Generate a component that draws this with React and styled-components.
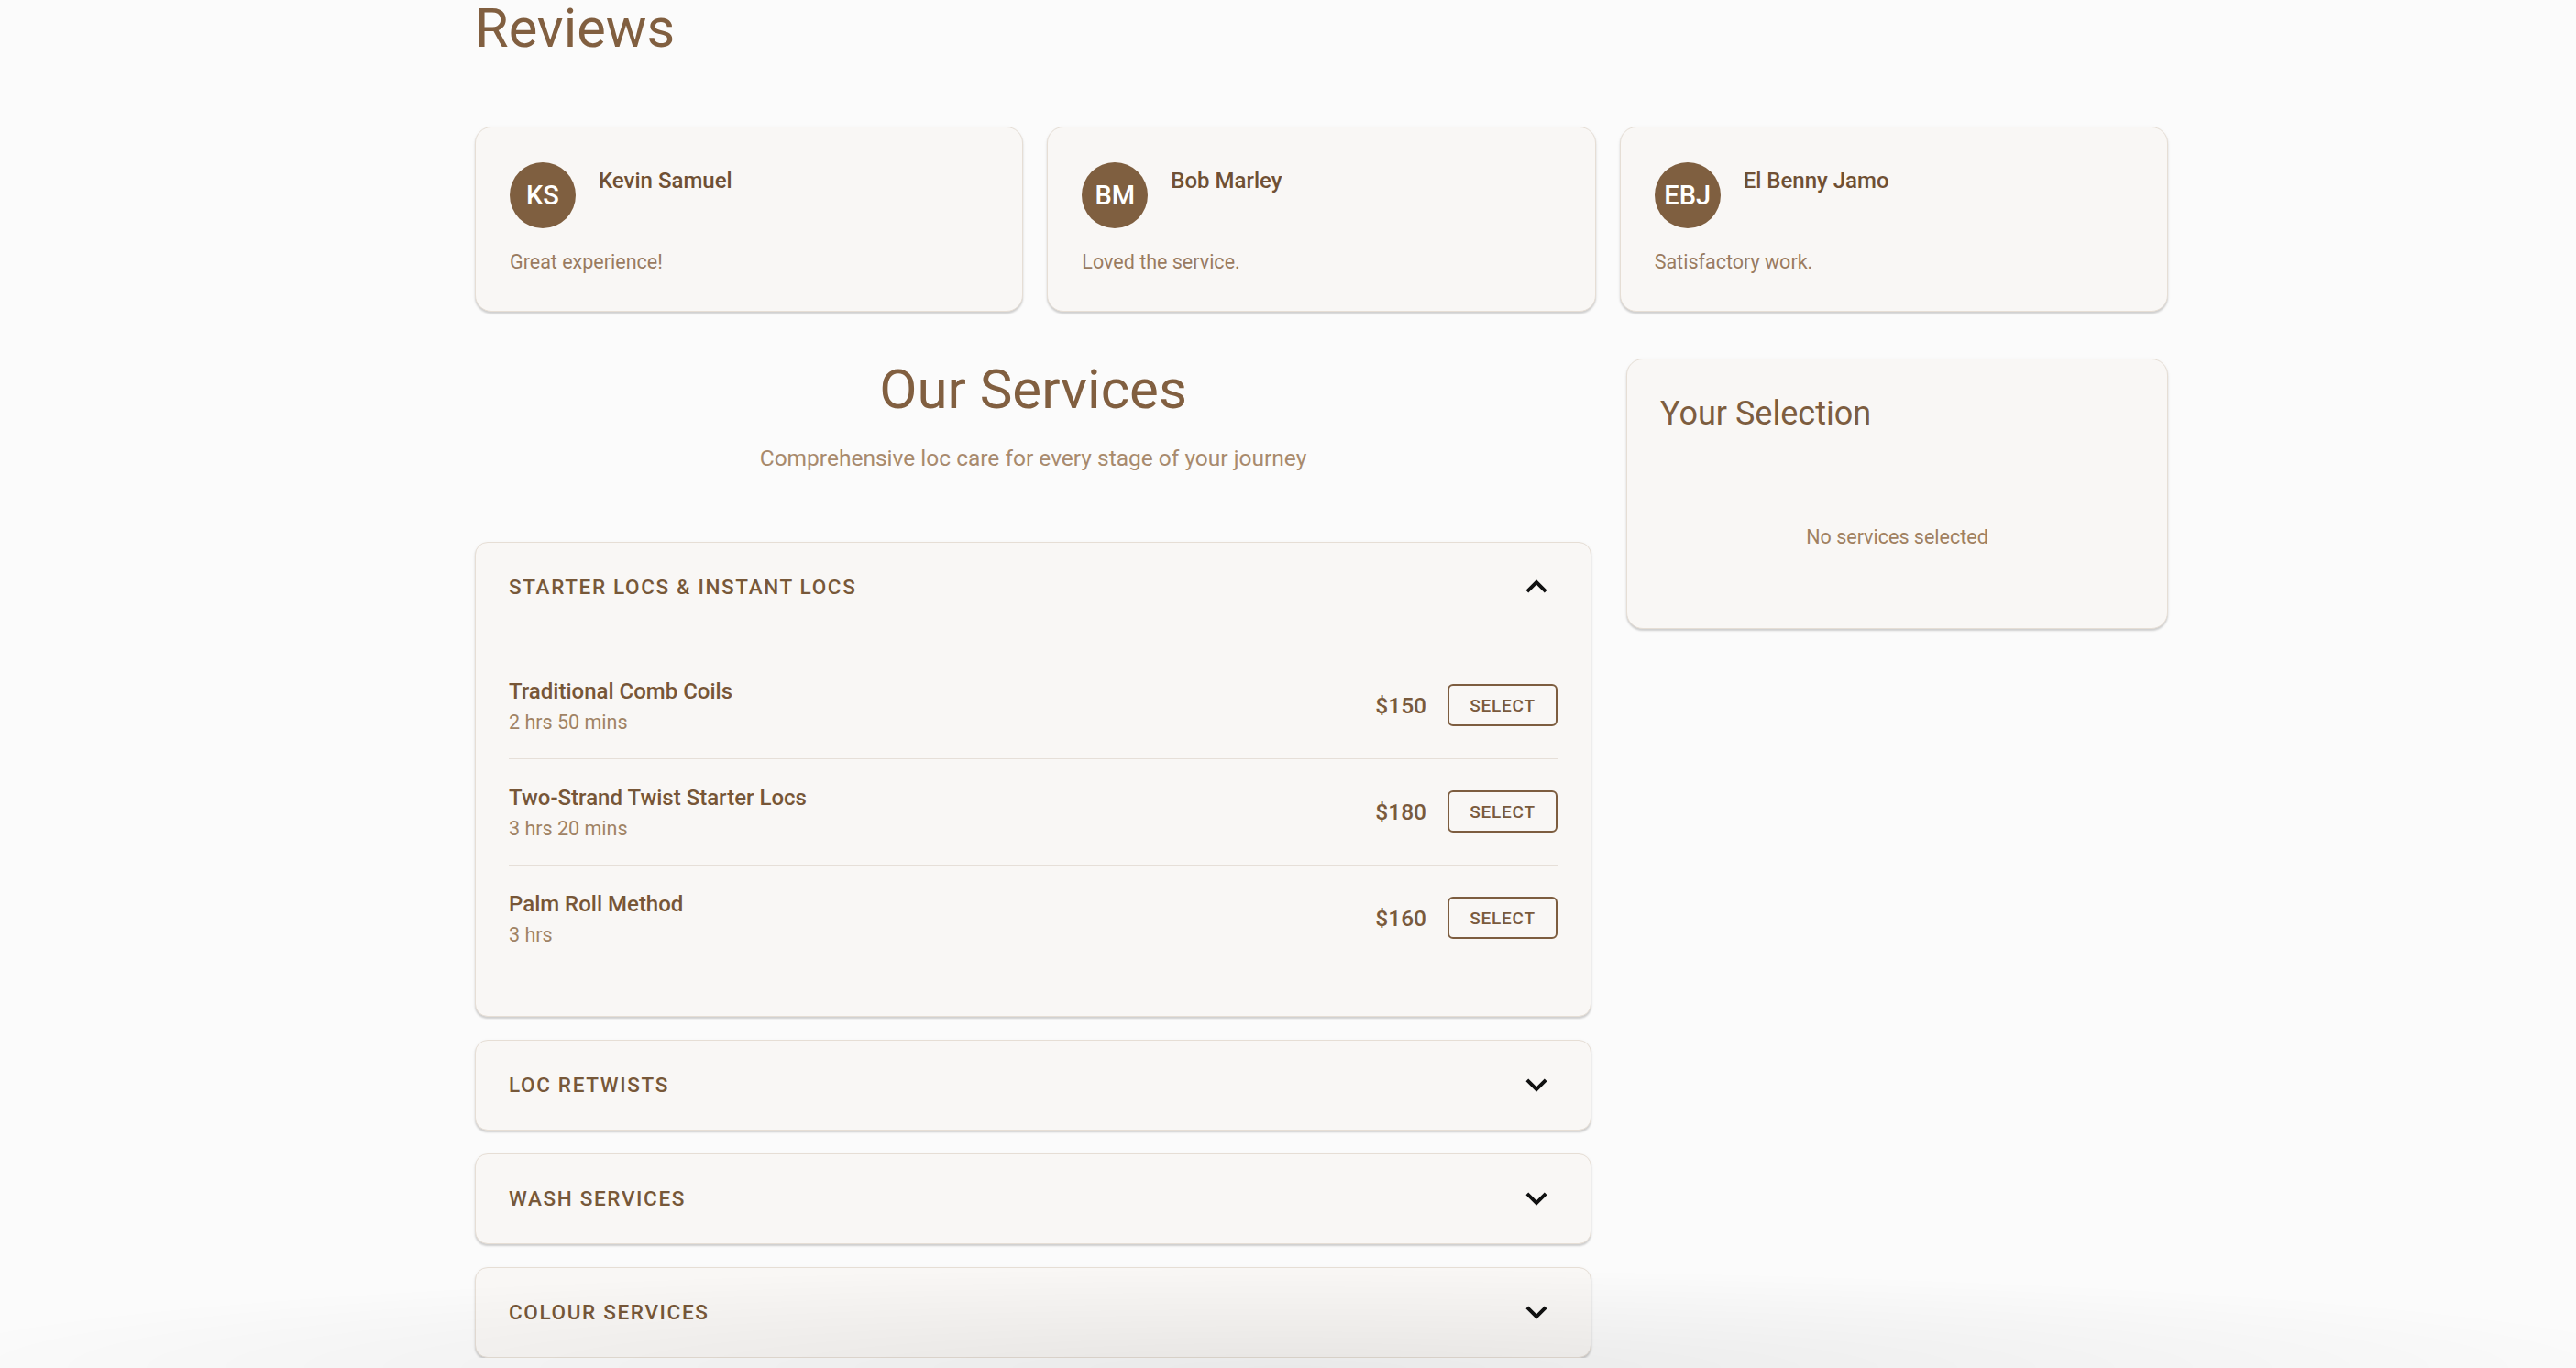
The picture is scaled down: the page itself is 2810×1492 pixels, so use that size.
import styled, { createGlobalStyle } from "styled-components";

const GlobalStyle = createGlobalStyle`
  body {
    margin: 0;
    background: #fbfbfb;
    font-family: Roboto, "Liberation Sans", sans-serif;
    color: #7d5d3f;
  }
`;

const Page = styled.div`
  width: 1847px;
  margin-left: 518px;
`;

const PageTitle = styled.h2`
  margin: 2px 0 0;
  font-size: 59.5px;
  line-height: 1;
  font-weight: 400;
  color: #815f40;
`;

const ReviewGrid = styled.div`
  display: grid;
  grid-template-columns: repeat(3, 1fr);
  gap: 26px;
  margin-top: 76px;
`;

const Card = styled.div`
  background: #f9f7f5;
  border: 1.5px solid #e6ded5;
  border-radius: ${(props) => props.radius || 18}px;
  box-shadow: 0 2px 2px rgba(0, 0, 0, 0.16), 0 1px 4px rgba(0, 0, 0, 0.04);
`;

const ReviewCard = styled(Card)`
  padding: 38px 37px 38px;
`;

const ReviewHead = styled.div`
  display: flex;
  align-items: flex-start;
  gap: 25px;
`;

const Avatar = styled.div`
  width: 72px;
  height: 72px;
  border-radius: 50%;
  background: #7f5f40;
  color: #fff;
  display: flex;
  align-items: center;
  justify-content: center;
  font-size: 29px;
  font-weight: 500;
  flex-shrink: 0;
`;

const Name = styled.div`
  padding-top: 2px;
  font-size: 24px;
  line-height: 1.5;
  font-weight: 500;
  color: #6f5034;
`;

const ReviewText = styled.p`
  margin: 21px 0 0;
  font-size: 21.5px;
  line-height: 31px;
  color: #9a7b60;
`;

const ServicesGrid = styled.div`
  display: grid;
  grid-template-columns: 1218px 1fr;
  gap: 38px;
  margin-top: 51px;
  align-items: start;
`;

const ServicesColumn = styled.div`
  display: flex;
  flex-direction: column;
`;

const SectionTitle = styled.h2`
  margin: 4px 0 0;
  text-align: center;
  font-size: 60px;
  line-height: 1;
  font-weight: 400;
  color: #815f40;
`;

const SectionSub = styled.p`
  margin: 27px 0 73px;
  text-align: center;
  font-size: 24.5px;
  line-height: 36px;
  color: #a88a6d;
`;

const AccordionList = styled.div`
  display: flex;
  flex-direction: column;
  gap: 25px;
`;

const AccordionHeader = styled.div`
  height: 97px;
  padding: 0 36px;
  display: flex;
  align-items: center;
  justify-content: space-between;
`;

const AccordionLabel = styled.span`
  font-size: 22.5px;
  font-weight: 500;
  letter-spacing: 1.65px;
  text-transform: uppercase;
  color: #775839;
`;

const Details = styled.div`
  padding: 23px 36px 49px;
`;

const ServiceRow = styled.div`
  min-height: 115px;
  display: flex;
  align-items: center;
  justify-content: space-between;
  border-bottom: 1.5px solid #e6dfd8;
  &:last-child {
    border-bottom: none;
  }
`;

const ServiceName = styled.div`
  font-size: 24px;
  line-height: 34px;
  font-weight: 500;
  color: #775637;
`;

const Duration = styled.div`
  margin-top: 2px;
  font-size: 21.5px;
  line-height: 29px;
  color: #a08365;
`;

const RowRight = styled.div`
  display: flex;
  align-items: center;
  gap: 23px;
`;

const Price = styled.span`
  font-size: 24.5px;
  font-weight: 500;
  color: #7a5a3c;
`;

const SelectButton = styled.button`
  width: 120px;
  height: 46px;
  border: 2px solid #7d5d3f;
  border-radius: 6px;
  background: transparent;
  color: #7a5a3c;
  font-family: Roboto, sans-serif;
  font-size: 19px;
  font-weight: 500;
  letter-spacing: 0.8px;
  cursor: pointer;
`;

const SelectionCard = styled(Card)`
  padding: 37px 36px 36px;
`;

const SelectionTitle = styled.h3`
  margin: 0;
  font-size: 36px;
  line-height: 44px;
  font-weight: 400;
  color: #7d5d3f;
`;

const Empty = styled.p`
  margin: 0;
  padding: 98px 0 48px;
  text-align: center;
  font-size: 21.5px;
  line-height: 30px;
  color: #a08060;
`;

const BottomShade = styled.div`
  position: fixed;
  left: 0;
  right: 0;
  bottom: 0;
  height: 110px;
  pointer-events: none;
  background: radial-gradient(
    ellipse 55% 100% at 50% 100%,
    rgba(0, 0, 0, 0.07),
    rgba(0, 0, 0, 0) 100%
  );
`;

const Chevron = ({ up }) => (
  <svg width="46" height="46" viewBox="0 0 24 24" fill="#111">
    {up ? (
      <path d="m12 8-6 6 1.41 1.41L12 10.83l4.59 4.58L18 14z" />
    ) : (
      <path d="M16.59 8.59 12 13.17 7.41 8.59 6 10l6 6 6-6z" />
    )}
  </svg>
);

const reviews = [
  { initials: "KS", name: "Kevin Samuel", text: "Great experience!" },
  { initials: "BM", name: "Bob Marley", text: "Loved the service." },
  { initials: "EBJ", name: "El Benny Jamo", text: "Satisfactory work." },
];

const categories = [
  {
    title: "Starter Locs & Instant Locs",
    open: true,
    items: [
      { name: "Traditional Comb Coils", time: "2 hrs 50 mins", price: 150 },
      { name: "Two-Strand Twist Starter Locs", time: "3 hrs 20 mins", price: 180 },
      { name: "Palm Roll Method", time: "3 hrs", price: 160 },
    ],
  },
  { title: "Loc Retwists", items: [] },
  { title: "Wash Services", items: [] },
  { title: "Colour Services", items: [] },
];

export default function App() {
  return (
    <>
      <GlobalStyle />
      <Page>
        <PageTitle>Reviews</PageTitle>
        <ReviewGrid>
          {reviews.map((r) => (
            <ReviewCard key={r.name}>
              <ReviewHead>
                <Avatar>{r.initials}</Avatar>
                <Name>{r.name}</Name>
              </ReviewHead>
              <ReviewText>{r.text}</ReviewText>
            </ReviewCard>
          ))}
        </ReviewGrid>

        <ServicesGrid>
          <ServicesColumn>
            <SectionTitle>Our Services</SectionTitle>
            <SectionSub>
              Comprehensive loc care for every stage of your journey
            </SectionSub>
            <AccordionList>
              {categories.map((c) => (
                <Card radius={14} key={c.title}>
                  <AccordionHeader>
                    <AccordionLabel>{c.title}</AccordionLabel>
                    <Chevron up={c.open} />
                  </AccordionHeader>
                  {c.open && (
                    <Details>
                      {c.items.map((s) => (
                        <ServiceRow key={s.name}>
                          <div>
                            <ServiceName>{s.name}</ServiceName>
                            <Duration>{s.time}</Duration>
                          </div>
                          <RowRight>
                            <Price>${s.price}</Price>
                            <SelectButton>SELECT</SelectButton>
                          </RowRight>
                        </ServiceRow>
                      ))}
                    </Details>
                  )}
                </Card>
              ))}
            </AccordionList>
          </ServicesColumn>

          <SelectionCard>
            <SelectionTitle>Your Selection</SelectionTitle>
            <Empty>No services selected</Empty>
          </SelectionCard>
        </ServicesGrid>
      </Page>
      <BottomShade />
    </>
  );
}
